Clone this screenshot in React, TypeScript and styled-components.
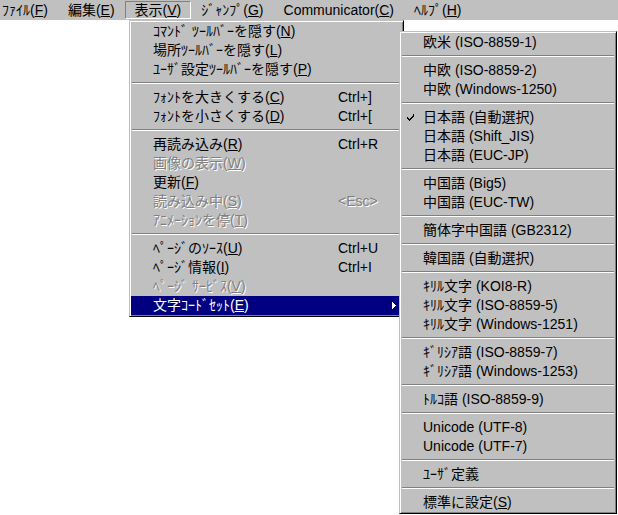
import React from 'react'
import styled, { createGlobalStyle } from 'styled-components'

const GlobalStyle = createGlobalStyle`
    html, body {
        margin: 0;
        padding: 0;
        background: #fff;
    }
    body {
        font-family: "Liberation Sans", "Noto Sans CJK JP", sans-serif;
        font-size: 14px;
        color: #000;
    }
`

type Item =
    | { sep: true }
    | {
          sep?: false
          label: React.ReactNode
          shortcut?: string
          disabled?: boolean
          active?: boolean
          submenu?: boolean
          checked?: boolean
      }

const Key = ({ k }: { k: string }) => <u>{k}</u>

const barItems = [
    { text: 'ﾌｧｲﾙ', key: 'F' },
    { text: '編集', key: 'E' },
    { text: '表示', key: 'V', open: true },
    { text: 'ｼﾞｬﾝﾌﾟ', key: 'G' },
    { text: 'Communicator', key: 'C' },
    { text: 'ﾍﾙﾌﾟ', key: 'H' },
]

const viewMenu: Item[] = [
    { label: <>ｺﾏﾝﾄﾞ ﾂｰﾙﾊﾞｰを隠す(<Key k="N" />)</> },
    { label: <>場所ﾂｰﾙﾊﾞｰを隠す(<Key k="L" />)</> },
    { label: <>ﾕｰｻﾞ設定ﾂｰﾙﾊﾞｰを隠す(<Key k="P" />)</> },
    { sep: true },
    { label: <>ﾌｫﾝﾄを大きくする(<Key k="C" />)</>, shortcut: 'Ctrl+]' },
    { label: <>ﾌｫﾝﾄを小さくする(<Key k="D" />)</>, shortcut: 'Ctrl+[' },
    { sep: true },
    { label: <>再読み込み(<Key k="R" />)</>, shortcut: 'Ctrl+R' },
    { label: <>画像の表示(<Key k="W" />)</>, disabled: true },
    { label: <>更新(<Key k="F" />)</> },
    { label: <>読み込み中(<Key k="S" />)</>, shortcut: '<Esc>', disabled: true },
    { label: <>ｱﾆﾒｰｼｮﾝを停(<Key k="T" />)</>, disabled: true },
    { sep: true },
    { label: <>ﾍﾟｰｼﾞのｿｰｽ(<Key k="U" />)</>, shortcut: 'Ctrl+U' },
    { label: <>ﾍﾟｰｼﾞ情報(<Key k="I" />)</>, shortcut: 'Ctrl+I' },
    { label: <>ﾍﾟｰｼﾞ ｻｰﾋﾞｽ(<Key k="V" />)</>, disabled: true },
    { label: <>文字ｺｰﾄﾞｾｯﾄ(<Key k="E" />)</>, active: true, submenu: true },
]

const charsetMenu: Item[] = [
    { label: '欧米 (ISO-8859-1)' },
    { sep: true },
    { label: '中欧 (ISO-8859-2)' },
    { label: '中欧 (Windows-1250)' },
    { sep: true },
    { label: '日本語 (自動選択)', checked: true },
    { label: '日本語 (Shift_JIS)' },
    { label: '日本語 (EUC-JP)' },
    { sep: true },
    { label: '中国語 (Big5)' },
    { label: '中国語 (EUC-TW)' },
    { sep: true },
    { label: '簡体字中国語 (GB2312)' },
    { sep: true },
    { label: '韓国語 (自動選択)' },
    { sep: true },
    { label: 'ｷﾘﾙ文字 (KOI8-R)' },
    { label: 'ｷﾘﾙ文字 (ISO-8859-5)' },
    { label: 'ｷﾘﾙ文字 (Windows-1251)' },
    { sep: true },
    { label: 'ｷﾞﾘｼｱ語 (ISO-8859-7)' },
    { label: 'ｷﾞﾘｼｱ語 (Windows-1253)' },
    { sep: true },
    { label: 'ﾄﾙｺ語 (ISO-8859-9)' },
    { sep: true },
    { label: 'Unicode (UTF-8)' },
    { label: 'Unicode (UTF-7)' },
    { sep: true },
    { label: 'ﾕｰｻﾞ定義' },
    { sep: true },
    { label: <>標準に設定(<Key k="S" />)</> },
]

const CheckMark = () => (
    <svg width="7" height="7" viewBox="0 0 7 7" shapeRendering="crispEdges">
        <path
            d="M6 0h1v3h-1v1h-1v1h-1v1h-1v1h-1v-1h-1v-1h-1v-2h1v1h1v1h1v-1h1v-1h1v-1h1z"
            fill="currentColor"
        />
    </svg>
)

const SubArrow = () => (
    <svg width="4" height="7" viewBox="0 0 4 7" shapeRendering="crispEdges">
        <path d="M0 0L4 3.5L0 7z" fill="currentColor" />
    </svg>
)

const MenuList = ({ items, shortcutWidth }: { items: Item[]; shortcutWidth?: number }) => (
    <>
        {items.map((it, i) =>
            it.sep ? (
                <Separator key={i} />
            ) : (
                <Row key={i} $active={it.active} $disabled={it.disabled}>
                    <Gutter>{it.checked ? <CheckMark /> : null}</Gutter>
                    <Label>{it.label}</Label>
                    {shortcutWidth ? (
                        <Shortcut $width={shortcutWidth}>
                            {it.submenu ? <SubArrow /> : it.shortcut}
                        </Shortcut>
                    ) : null}
                </Row>
            )
        )}
    </>
)

const App = () => {
    return (
        <Screen>
            <GlobalStyle />
            <MenuBar>
                {barItems.map((b) => (
                    <BarItem key={b.key + b.text} $open={b.open}>
                        {b.text}(<Key k={b.key} />)
                    </BarItem>
                ))}
            </MenuBar>
            <Popup $top={20} $left={129} $width={275}>
                <MenuList items={viewMenu} shortcutWidth={58} />
            </Popup>
            <Popup $top={31} $left={399} $width={218}>
                <MenuList items={charsetMenu} />
            </Popup>
        </Screen>
    )
}

export default App

const Screen = styled.div`
    position: relative;
    width: 618px;
    height: 515px;
    overflow: hidden;
    background: #fff;
`

const MenuBar = styled.div`
    display: flex;
    align-items: stretch;
    height: 20px;
    box-sizing: border-box;
    padding: 1px 0 1px 2px;
    background: #c0c0c0;
    white-space: nowrap;
`

const BarItem = styled.div<{ $open?: boolean }>`
    display: flex;
    align-items: center;
    padding: 0 9px;
    border: 1px solid transparent;
    border-color: ${(p) => (p.$open ? '#808080 #fff #fff #808080' : 'transparent')};
    line-height: 16px;
    &:first-child {
        padding-left: 0;
        border-left-width: 0;
    }
`

const Popup = styled.div<{ $top: number; $left: number; $width: number }>`
    position: absolute;
    top: ${(p) => p.$top}px;
    left: ${(p) => p.$left}px;
    width: ${(p) => p.$width}px;
    box-sizing: border-box;
    padding: 1px;
    background: #c0c0c0;
    border: 1px solid;
    border-color: #c0c0c0 #000 #000 #c0c0c0;
    box-shadow: inset 1px 1px 0 #fff, inset -1px -1px 0 #808080;
`

const Row = styled.div<{ $active?: boolean; $disabled?: boolean }>`
    display: flex;
    align-items: center;
    height: 19px;
    line-height: 19px;
    padding-right: 6px;
    white-space: nowrap;
    background: ${(p) => (p.$active ? '#000080' : 'transparent')};
    color: ${(p) => (p.$active ? '#fff' : p.$disabled ? '#808080' : '#000')};
    text-shadow: ${(p) => (p.$disabled ? '1px 1px 0 #fff' : 'none')};
`

const Gutter = styled.div`
    flex: 0 0 22px;
    display: flex;
    align-items: center;
    padding-left: 6px;
    box-sizing: border-box;
`

const Label = styled.div`
    flex: 1;
`

const Shortcut = styled.div<{ $width: number }>`
    flex: 0 0 ${(p) => p.$width}px;
    display: flex;
    align-items: center;
    svg {
        margin-left: auto;
    }
`

const Separator = styled.div`
    height: 9px;
    box-sizing: border-box;
    padding: 3px 1px 0;
    &::after {
        content: '';
        display: block;
        border-top: 1px solid #808080;
        border-bottom: 1px solid #fff;
    }
`
